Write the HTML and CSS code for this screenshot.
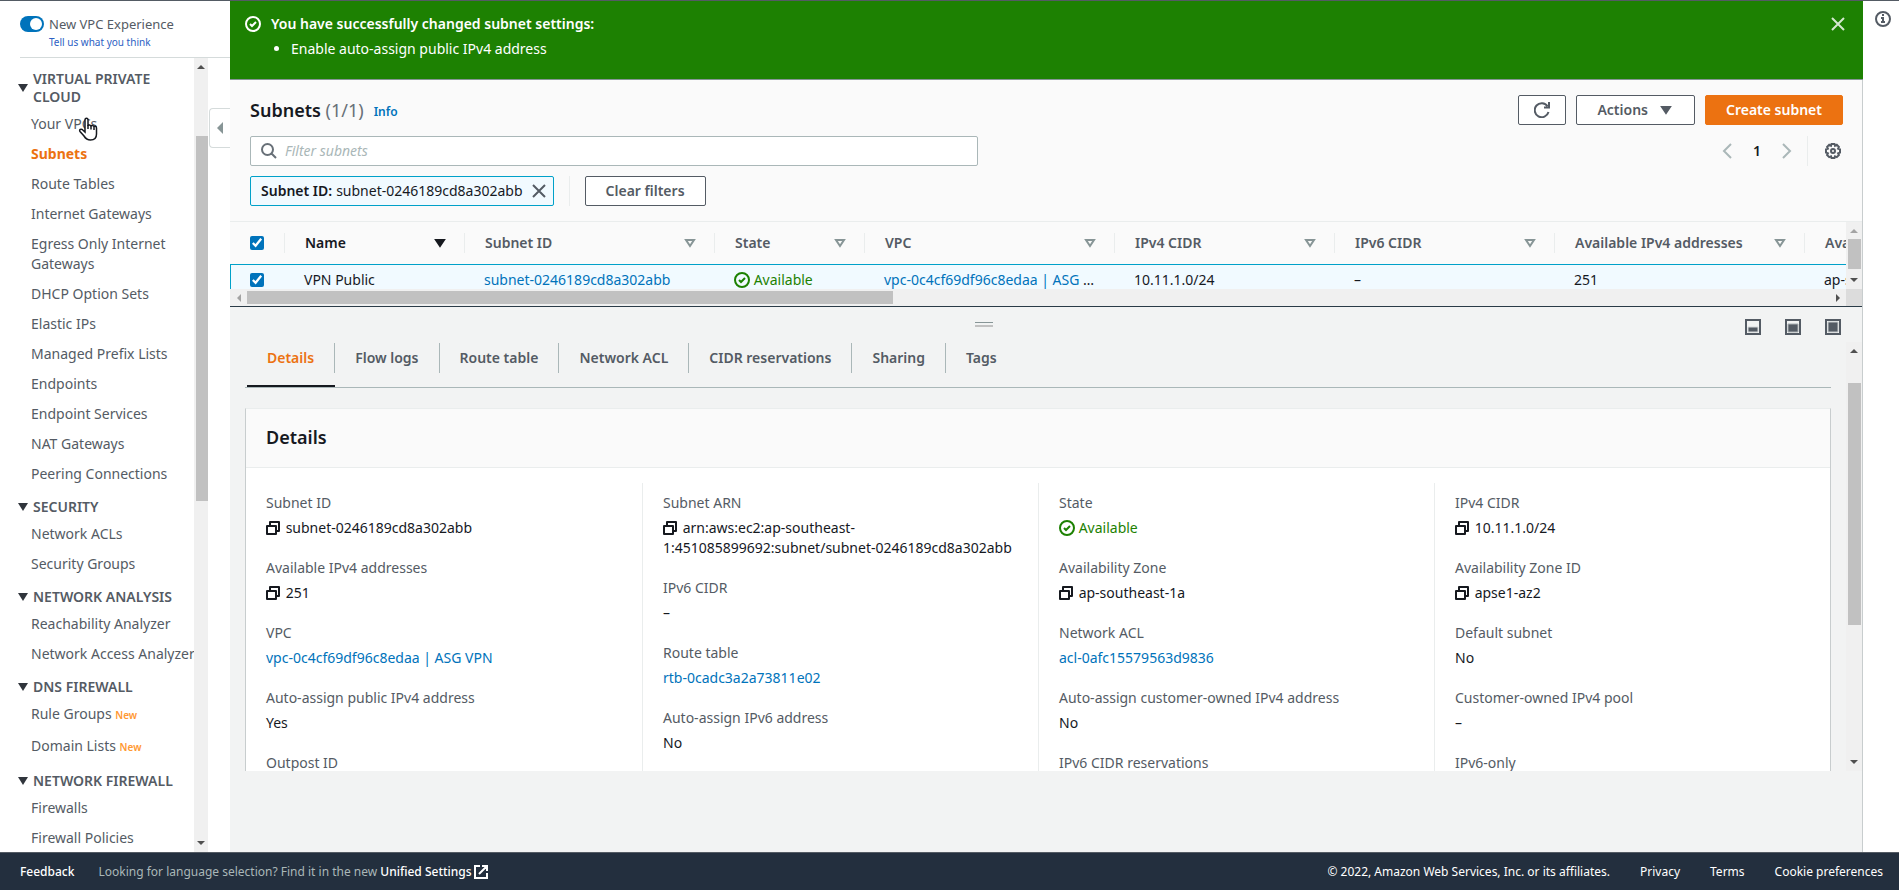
FILE: index.html
```html
<!DOCTYPE html>
<html lang="en">
<head>
  <meta charset="UTF-8">
  <meta name="viewport" content="width=device-width, initial-scale=1">
  <title>Subnets | VPC Management Console</title>
  <link rel="stylesheet" href="styles.css">
</head>
<body>
  <!-- shared icons -->
  <svg class="sprite" aria-hidden="true">
    <symbol id="copy" viewBox="0 0 16 16">
      <path d="M1 6h9v8H1zM4 6V2h9v9h-3" fill="none" stroke="currentColor" stroke-width="2" stroke-linejoin="round"/>
    </symbol>
    <symbol id="check" viewBox="0 0 16 16">
      <circle cx="8" cy="8" r="7" fill="none" stroke="currentColor" stroke-width="2"/>
      <path d="M5 8l2 2 4-4" fill="none" stroke="currentColor" stroke-width="2"/>
    </symbol>
    <symbol id="close" viewBox="0 0 16 16">
      <path d="M2 2l12 12M14 2L2 14" fill="none" stroke="currentColor" stroke-width="2"/>
    </symbol>
    <symbol id="caret" viewBox="0 0 16 16">
      <path d="M4 5h8l-4 6z" fill="currentColor" stroke="currentColor" stroke-width="2"/>
    </symbol>
    <symbol id="caret-open" viewBox="0 0 16 16">
      <path d="M4 5h8l-4 6z" fill="none" stroke="currentColor" stroke-width="2"/>
    </symbol>
  </svg>

  <div class="app">
    <nav class="sidebar">
      <div class="experience">
        <label class="switch"><input type="checkbox" role="switch" checked><span>New VPC Experience</span></label>
        <a href="#">Tell us what you think</a>
      </div>
      <div class="nav-scroll">
        <div class="nav-list">
          <h2>Virtual Private Cloud</h2>
          <ul>
            <li><a href="#">Your VPCs</a></li>
            <li><a href="#" class="current">Subnets</a></li>
            <li><a href="#">Route Tables</a></li>
            <li><a href="#">Internet Gateways</a></li>
            <li class="long"><a href="#">Egress Only Internet Gateways</a></li>
            <li><a href="#">DHCP Option Sets</a></li>
            <li><a href="#">Elastic IPs</a></li>
            <li><a href="#">Managed Prefix Lists</a></li>
            <li><a href="#">Endpoints</a></li>
            <li><a href="#">Endpoint Services</a></li>
            <li><a href="#">NAT Gateways</a></li>
            <li><a href="#">Peering Connections</a></li>
          </ul>
          <h2>Security</h2>
          <ul>
            <li><a href="#">Network ACLs</a></li>
            <li><a href="#">Security Groups</a></li>
          </ul>
          <h2>Network Analysis</h2>
          <ul>
            <li><a href="#">Reachability Analyzer</a></li>
            <li><a href="#">Network Access Analyzer</a></li>
          </ul>
          <h2>DNS Firewall</h2>
          <ul class="with-badges">
            <li><a href="#">Rule Groups</a> <span class="new">New</span></li>
            <li><a href="#">Domain Lists</a> <span class="new">New</span></li>
          </ul>
          <h2>Network Firewall</h2>
          <ul>
            <li><a href="#">Firewalls</a></li>
            <li><a href="#">Firewall Policies</a></li>
          </ul>
        </div>
        <div class="scrollbar nav-bar" aria-hidden="true"><i class="up"></i><b></b><i class="down"></i></div>
      </div>
      <button class="collapse" aria-label="Collapse navigation"></button>
      <svg class="pointer" viewBox="0 0 20 24" aria-hidden="true">
        <path d="M7 15V3c0-2.500 3-2.500 3 0v6c0-1.500 3-1.500 3 .5 0-1.500 3-1.500 3 .5 0-1.300 2.500-1.300 2.500 1V17c0 4-2 6-6 6-3.500 0-5-1.500-6.500-4L2 14.500c-1.200-2 1-3 2.500-1.800z" fill="#fff" stroke="#16191f" stroke-width="1.500"/>
        <path d="M10 8v4M13 9v3.500M16 10v3" stroke="#16191f" stroke-width="1.500"/>
      </svg>
    </nav>

    <main class="main">
      <section class="flash" role="status">
        <svg class="icon"><use href="#check"/></svg>
        <div class="flash-text">
          <strong>You have successfully changed subnet settings:</strong>
          <ul><li>Enable auto-assign public IPv4 address</li></ul>
        </div>
        <button class="plain" aria-label="Dismiss"><svg class="icon"><use href="#close"/></svg></button>
      </section>

      <section class="tools">
        <div class="title-row">
          <h1>Subnets <span>(1/1)</span></h1>
          <a class="info" href="#">Info</a>
          <div class="actions">
            <button class="btn refresh" aria-label="Refresh">
              <svg class="icon" viewBox="0 0 16 16"><path d="M14.500 10A7 7 0 1 1 13.500 4.200M15 0v5.500h-5" fill="none" stroke="currentColor" stroke-width="2"/></svg>
            </button>
            <button class="btn">Actions <svg class="icon"><use href="#caret"/></svg></button>
            <button class="btn primary">Create subnet</button>
          </div>
        </div>
        <div class="filter-row">
          <label class="search">
            <svg class="icon" viewBox="0 0 16 16"><path d="M10.500 10.500L15 15M12 6.500a5.500 5.500 0 1 1-11 0 5.500 5.500 0 0 1 11 0z" fill="none" stroke="currentColor" stroke-width="2"/></svg>
            <input type="text" placeholder="Filter subnets" aria-label="Filter subnets">
          </label>
          <div class="pager">
            <button class="plain off" aria-label="Previous page"><svg class="icon" viewBox="0 0 16 16"><path d="M12 1L5 8l7 7" fill="none" stroke="currentColor" stroke-width="2"/></svg></button>
            <button class="plain page">1</button>
            <button class="plain off" aria-label="Next page"><svg class="icon" viewBox="0 0 16 16"><path d="M4 1l7 7-7 7" fill="none" stroke="currentColor" stroke-width="2"/></svg></button>
            <button class="plain settings" aria-label="Preferences"><svg class="icon" viewBox="0 0 16 16"><path d="M6.500 1h3l.5 1.700 1.800-.9 2.100 2.100-.8 1.700 1.900.7v3.300l-1.900.7.800 1.700-2.100 2.100-1.800-.8-.5 1.600h-3L6 13.300l-1.800.8L2.100 12l.8-1.700L1 9.600V6.300l1.900-.7-.8-1.700 2.100-2.100 1.800.9z" fill="none" stroke="currentColor" stroke-width="2"/><circle cx="8" cy="8" r="2" fill="none" stroke="currentColor" stroke-width="2"/></svg></button>
          </div>
        </div>
        <div class="token-row">
          <span class="token"><strong>Subnet ID:</strong> subnet-0246189cd8a302abb
            <button class="plain" aria-label="Remove filter"><svg class="icon"><use href="#close"/></svg></button></span>
          <span class="rule"></span>
          <button class="btn">Clear filters</button>
        </div>
      </section>

      <section class="table-area">
        <div class="table-clip">
          <table>
            <colgroup>
              <col class="c-check"><col class="c-name"><col class="c-wide"><col class="c-state"><col class="c-wide"><col class="c-cidr"><col class="c-cidr"><col class="c-wide"><col class="c-wide">
            </colgroup>
            <thead>
              <tr>
                <th><input type="checkbox" aria-label="Select all" checked></th>
                <th class="sorted"><div>Name <svg class="icon"><use href="#caret"/></svg></div></th>
                <th><div>Subnet ID <svg class="icon"><use href="#caret-open"/></svg></div></th>
                <th><div>State <svg class="icon"><use href="#caret-open"/></svg></div></th>
                <th><div>VPC <svg class="icon"><use href="#caret-open"/></svg></div></th>
                <th><div>IPv4 CIDR <svg class="icon"><use href="#caret-open"/></svg></div></th>
                <th><div>IPv6 CIDR <svg class="icon"><use href="#caret-open"/></svg></div></th>
                <th><div>Available IPv4 addresses <svg class="icon"><use href="#caret-open"/></svg></div></th>
                <th><div>Availability Zone</div></th>
              </tr>
            </thead>
            <tbody>
              <tr>
                <td><input type="checkbox" aria-label="Select VPN Public" checked></td>
                <td>VPN Public</td>
                <td><a href="#">subnet-0246189cd8a302abb</a></td>
                <td><span class="ok"><svg class="icon"><use href="#check"/></svg> Available</span></td>
                <td><a href="#">vpc-0c4cf69df96c8edaa | ASG </a>…</td>
                <td>10.11.1.0/24</td>
                <td>–</td>
                <td>251</td>
                <td>ap-southeast-1a</td>
              </tr>
            </tbody>
          </table>
        </div>
        <div class="scrollbar table-bar" aria-hidden="true"><i class="up"></i><b></b><i class="down"></i></div>
        <div class="h-scrollbar" aria-hidden="true"><i class="left"></i><b></b><i class="right"></i></div>
        <div class="corner"></div>
      </section>

      <section class="split">
        <div class="split-head">
          <span class="grip"></span>
          <div class="sizes">
            <button class="plain" aria-label="Small panel"><svg class="icon" viewBox="0 0 16 16"><path d="M1 1h14v14H1z" fill="none" stroke="currentColor" stroke-width="2"/><path d="M3 8h10v5H3z" fill="currentColor" stroke="#d5d9da"/></svg></button>
            <button class="plain" aria-label="Medium panel"><svg class="icon" viewBox="0 0 16 16"><path d="M1 1h14v14H1z" fill="none" stroke="currentColor" stroke-width="2"/><path d="M3 5h10v8H3z" fill="currentColor" stroke="#a9afb2"/></svg></button>
            <button class="plain" aria-label="Full panel"><svg class="icon" viewBox="0 0 16 16"><path d="M1 1h14v14H1z" fill="none" stroke="currentColor" stroke-width="2"/><path d="M3 3h10v10H3z" fill="currentColor" stroke="#c5cacc"/></svg></button>
          </div>
        </div>
        <div class="split-body">
          <div class="split-content">
            <div class="tabs" role="tablist">
              <button role="tab" aria-selected="true">Details</button>
              <button role="tab">Flow logs</button>
              <button role="tab">Route table</button>
              <button role="tab">Network ACL</button>
              <button role="tab">CIDR reservations</button>
              <button role="tab">Sharing</button>
              <button role="tab">Tags</button>
            </div>
            <div class="card">
              <h2>Details</h2>
              <div class="columns">
                <dl>
                  <dt>Subnet ID</dt><dd><svg class="icon"><use href="#copy"/></svg> subnet-0246189cd8a302abb</dd>
                  <dt>Available IPv4 addresses</dt><dd><svg class="icon"><use href="#copy"/></svg> 251</dd>
                  <dt>VPC</dt><dd><a href="#">vpc-0c4cf69df96c8edaa | ASG VPN</a></dd>
                  <dt>Auto-assign public IPv4 address</dt><dd>Yes</dd>
                  <dt>Outpost ID</dt><dd>–</dd>
                </dl>
                <dl>
                  <dt>Subnet ARN</dt><dd><svg class="icon"><use href="#copy"/></svg> arn:aws:ec2:ap-southeast-<br>1:451085899692:subnet/subnet-0246189cd8a302abb</dd>
                  <dt>IPv6 CIDR</dt><dd>–</dd>
                  <dt>Route table</dt><dd><a href="#">rtb-0cadc3a2a73811e02</a></dd>
                  <dt>Auto-assign IPv6 address</dt><dd>No</dd>
                </dl>
                <dl>
                  <dt>State</dt><dd class="ok"><svg class="icon"><use href="#check"/></svg> Available</dd>
                  <dt>Availability Zone</dt><dd><svg class="icon"><use href="#copy"/></svg> ap-southeast-1a</dd>
                  <dt>Network ACL</dt><dd><a href="#">acl-0afc15579563d9836</a></dd>
                  <dt>Auto-assign customer-owned IPv4 address</dt><dd>No</dd>
                  <dt>IPv6 CIDR reservations</dt><dd>–</dd>
                </dl>
                <dl>
                  <dt>IPv4 CIDR</dt><dd><svg class="icon"><use href="#copy"/></svg> 10.11.1.0/24</dd>
                  <dt>Availability Zone ID</dt><dd><svg class="icon"><use href="#copy"/></svg> apse1-az2</dd>
                  <dt>Default subnet</dt><dd>No</dd>
                  <dt>Customer-owned IPv4 pool</dt><dd>–</dd>
                  <dt>IPv6-only</dt><dd>No</dd>
                </dl>
              </div>
            </div>
          </div>
          <div class="scrollbar split-bar" aria-hidden="true"><i class="up"></i><b></b><i class="down"></i></div>
        </div>
      </section>
    </main>

    <aside class="help">
      <button class="plain" aria-label="Open help panel"><svg class="icon" viewBox="0 0 16 16"><circle cx="8" cy="8" r="7" fill="none" stroke="currentColor" stroke-width="2"/><path d="M7 3h2v2H7zM6 6h3v4h1v2H6v-2h1V8H6z" fill="currentColor"/></svg></button>
    </aside>
  </div>

  <footer class="footer">
    <a href="#">Feedback</a>
    <p>Looking for language selection? Find it in the new <a href="#">Unified Settings<svg class="icon" viewBox="0 0 16 16"><path d="M7 2H2v12h12V9M9 2h5v5M14 2L6 10" fill="none" stroke="currentColor" stroke-width="2"/></svg></a></p>
    <div class="legal">
      <span>© 2022, Amazon Web Services, Inc. or its affiliates.</span>
      <a href="#">Privacy</a>
      <a href="#">Terms</a>
      <a href="#">Cookie preferences</a>
    </div>
  </footer>
</body>
</html>
```
FILE: styles.css
```css
* {
  box-sizing: border-box;
}
body {
  margin: 0;
  height: 100vh;
  display: flex;
  flex-direction: column;
  border-top: 1px solid #545b64;
  font-family: "Noto Sans", sans-serif;
  font-size: 14px;
  line-height: 20px;
  color: #16191f;
  background: #fff;
  overflow: hidden;
}
h1, h2, ul, dl, dd, p {
  margin: 0;
  padding: 0;
}
h1, h2, th, strong {
  font-weight: 600;
}
a {
  color: #0073bb;
  text-decoration: none;
}
button, input {
  font: inherit;
  color: inherit;
}
.sprite {
  position: absolute;
  width: 0;
  height: 0;
}
.icon {
  width: 16px;
  height: 16px;
  flex: none;
}
.plain {
  display: flex;
  padding: 0;
  border: 0;
  background: none;
  color: #545b64;
}
.app {
  flex: 1;
  min-height: 0;
  display: grid;
  grid-template-columns: 230px minmax(0, 1fr) 36px;
}

/* sidebar */
.sidebar {
  position: relative;
  display: flex;
  flex-direction: column;
  min-height: 0;
  color: #545b64;
}
.experience {
  margin-left: 20px;
  height: 57px;
  padding-top: 13px;
  border-bottom: 1px solid #d5dbdb;
}
.experience a {
  display: block;
  margin-left: 29px;
  font-size: 10px;
  line-height: 16px;
  color: #2d5fc4;
}
.switch {
  display: flex;
  align-items: center;
  gap: 5px;
  font-size: 13px;
}
.switch input {
  appearance: none;
  margin: 0;
  width: 24px;
  height: 16px;
  padding: 2px;
  border-radius: 8px;
  background: #0073bb;
  display: flex;
  justify-content: flex-end;
}
.switch input::before {
  content: "";
  width: 12px;
  height: 12px;
  border-radius: 50%;
  background: #fff;
}
.nav-scroll {
  flex: 1;
  min-height: 0;
  display: flex;
  overflow: hidden;
}
.nav-list {
  width: 194px;
  padding-top: 3px;
}
.nav-list h2 {
  display: flex;
  align-items: center;
  gap: 5px;
  margin: 9px 10px 3px 18px;
  font-size: 14px;
  line-height: 18px;
  text-transform: uppercase;
}
.nav-list h2::before {
  content: "";
  border: 5px solid transparent;
  border-top: 8px solid #30353c;
  border-bottom: 0;
}
.nav-list ul {
  list-style: none;
}
.nav-list li {
  padding: 5px 0 5px 31px;
  white-space: nowrap;
}
.nav-list .long {
  white-space: normal;
}
.nav-list .with-badges li {
  padding-bottom: 7px;
}
.nav-list a {
  color: #545b64;
}
.nav-list .current {
  color: #ec7211;
  font-weight: bold;
}
.new {
  font-size: 10px;
  font-weight: 600;
  line-height: 16px;
  color: #ff9933;
}
.collapse {
  position: absolute;
  right: 0;
  top: 107px;
  width: 21px;
  height: 40px;
  padding: 0 0 0 7px;
  border: 1px solid #d5dbdb;
  border-right: 0;
  border-radius: 4px 0 0 4px;
  background: #fff;
}
.collapse::before {
  content: "";
  display: block;
  width: 0;
  border: 6px solid transparent;
  border-right-color: #879596;
  border-left: 0;
}
.pointer {
  position: absolute;
  left: 78px;
  top: 116px;
  width: 20px;
  height: 24px;
}

/* scrollbars */
.scrollbar {
  display: flex;
  flex-direction: column;
  align-items: center;
  background: #f0f0f0;
}
.scrollbar b, .h-scrollbar b {
  background: #c1c1c1;
}
.scrollbar i, .h-scrollbar i {
  border: 4px solid transparent;
}
.scrollbar .up {
  margin-top: 7px;
  border-top: 0;
  border-bottom-color: #505050;
}
.scrollbar .down {
  margin: auto 0 7px;
  border-bottom: 0;
  border-top-color: #505050;
}
.nav-bar {
  width: 14px;
}
.nav-bar b {
  align-self: stretch;
  margin: 67px 0 0 2px;
  height: 46%;
}

/* main column */
.main {
  display: flex;
  flex-direction: column;
  min-height: 0;
  background: #f2f3f3;
  border-right: 1px solid #c8cdce;
}
.flash {
  display: flex;
  align-items: flex-start;
  gap: 10px;
  height: 79px;
  margin-right: -1px;
  padding: 13px 17px 0 15px;
  background: #1d8102;
  border-bottom: 1px solid #879596;
  color: #fff;
}
.flash > .icon, .flash .plain {
  margin-top: 2px;
}
.flash-text {
  flex: 1;
}
.flash ul {
  margin-top: 5px;
  padding-left: 20px;
}
.flash .plain {
  color: #d5e8d0;
}
.tools {
  display: flex;
  flex-direction: column;
  gap: 10px;
  padding: 15px 19px 15px 20px;
  background: #fafafa;
  border-bottom: 1px solid #eaeded;
}
.title-row, .filter-row, .token-row, .actions, .pager {
  display: flex;
  align-items: center;
}
.title-row {
  gap: 10px;
}
h1 {
  font-size: 18px;
  line-height: 22px;
}
h1 span {
  font-weight: normal;
  color: #687078;
}
.info {
  font-size: 12px;
  font-weight: 600;
  padding-top: 4px;
}
.actions {
  margin-left: auto;
  gap: 10px;
}
.btn {
  display: flex;
  align-items: center;
  justify-content: center;
  gap: 10px;
  height: 30px;
  padding: 0 20px;
  border: 1px solid #545b64;
  border-radius: 2px;
  background: #fff;
  color: #545b64;
  font-weight: 600;
}
.refresh {
  padding: 0 15px;
}
.primary {
  border-color: #ec7211;
  background: #ec7211;
  color: #fff;
}
.filter-row {
  height: 31px;
  justify-content: space-between;
}
.search {
  width: 100%;
  max-width: 728px;
  height: 30px;
  display: flex;
  align-items: center;
  gap: 8px;
  padding: 0 10px;
  border: 1px solid #aab7b8;
  border-radius: 2px;
  background: #fff;
  color: #687078;
}
.search input {
  flex: 1;
  border: 0;
  padding: 0;
  outline: 0;
  background: none;
}
.search input::placeholder {
  color: #aab7b8;
  font-style: italic;
}
.off {
  color: #aab7b8;
}
.page {
  margin: 0 18px;
  color: #16191f;
  font-weight: 600;
}
.settings {
  height: 30px;
  align-items: center;
  margin-left: 12px;
  padding: 0 2px 0 17px;
  border-left: 1px solid #eaeded;
}
.token-row {
  gap: 15px;
}
.token {
  height: 30px;
  display: flex;
  align-items: center;
  gap: 4px;
  padding: 0 6px 0 10px;
  border: 1px solid #00a1c9;
  border-radius: 2px;
  background: #f1faff;
}
.token .plain {
  margin-left: 4px;
}
.rule {
  width: 1px;
  height: 30px;
  background: #eaeded;
}

/* table */
.table-area {
  display: grid;
  grid-template: 67px 17px / minmax(0, 1fr) 16px;
  background: #f0f0f0;
  border-bottom: 1px solid #2a3b47;
}
.table-clip {
  overflow: hidden;
  background: #fafafa;
}
table {
  width: 1824px;
  table-layout: fixed;
  border-collapse: separate;
  border-spacing: 0;
}
.c-check { width: 54px; }
.c-name { width: 180px; }
.c-wide { width: 250px; }
.c-state { width: 150px; }
.c-cidr { width: 220px; }
th {
  padding: 11px 0;
  text-align: left;
  color: #545b64;
}
th div {
  display: flex;
  align-items: center;
  justify-content: space-between;
  padding: 0 16px 0 20px;
  border-left: 1px solid #eaeded;
}
.sorted, .sorted .icon {
  color: #16191f;
}
th:not(.sorted) .icon {
  color: #879596;
}
td {
  height: 40px;
  padding: 5px 0 14px 20px;
  border-top: 1px solid #00a1c9;
  background: #f1faff;
  white-space: nowrap;
}
th:first-child {
  padding-left: 20px;
}
td:first-child {
  padding-left: 19px;
  border-left: 1px solid #00a1c9;
}
th input, td input {
  display: block;
  width: 14px;
  height: 14px;
  margin: 0;
  accent-color: #0073bb;
}
.ok {
  color: #1d8102;
}
td .icon, dd .icon {
  vertical-align: -3px;
}
.table-bar b {
  width: 13px;
  height: 30px;
  margin-top: 6px;
}
.table-bar .up {
  border-bottom-color: #a3a3a3;
}
.h-scrollbar {
  display: flex;
  align-items: center;
}
.h-scrollbar b {
  width: 40%;
  height: 13px;
  margin-left: 6px;
}
.h-scrollbar .left {
  margin-left: 7px;
  border-left: 0;
  border-right-color: #a3a3a3;
}
.h-scrollbar .right {
  margin: 0 6px 0 auto;
  border-right: 0;
  border-left-color: #505050;
}
.corner {
  background: #dcdcdc;
}

/* split panel */
.split {
  flex: 1;
  min-height: 0;
  display: flex;
  flex-direction: column;
  padding-bottom: 81px;
}
.split-head {
  height: 35px;
  display: grid;
  grid-template-columns: 1fr auto 1fr;
}
.grip {
  grid-column: 2;
  width: 18px;
  height: 5px;
  margin-top: 15px;
  margin-right: 125px;
  border-top: 1px solid #879596;
  border-bottom: 2px solid #c1c1c1;
}
.sizes {
  display: flex;
  justify-content: flex-end;
  gap: 24px;
  padding: 12px 21px 0 0;
}
.split-body {
  flex: 1;
  min-height: 0;
  display: flex;
  overflow: hidden;
}
.split-content {
  flex: 1;
  padding: 0 15px;
}
.split-bar {
  width: 16px;
}
.split-bar b {
  width: 13px;
  height: 242px;
  margin-top: 30px;
}
.tabs {
  display: flex;
  height: 46px;
  padding-left: 2px;
  border-bottom: 1px solid #aab7b8;
}
.tabs button {
  display: flex;
  height: 45px;
  padding: 0;
  border: 0;
  border-bottom: 2px solid transparent;
  background: none;
  color: #545b64;
  font-weight: 600;
  line-height: 32px;
}
.tabs button::before {
  content: "";
  width: 20px;
}
.tabs button::after {
  content: "";
  width: 20px;
  height: 30px;
  margin-top: 1px;
  border-right: 1px solid #aab7b8;
}
.tabs button:last-child::after {
  border: 0;
}
.tabs [aria-selected="true"] {
  color: #ec7211;
  border-bottom-color: #16191f;
}
.card {
  margin-top: 20px;
  background: #fff;
  border: 1px solid #c8cdce;
  border-top-color: #eaeded;
}
.card h2 {
  padding: 17px 20px 19px;
  font-size: 18px;
  line-height: 22px;
  background: #fafafa;
  border-bottom: 1px solid #eaeded;
}
.columns {
  display: grid;
  grid-template-columns: repeat(4, 1fr);
  padding: 15px 0;
}
.columns dl {
  padding: 10px 20px;
  border-left: 1px solid #eaeded;
}
.columns dl:first-child {
  border-left: 0;
}
dt {
  margin-bottom: 5px;
  color: #545b64;
}
dd {
  margin-bottom: 20px;
}

.help .plain {
  margin: 10px 8px 0 auto;
}

/* footer */
.footer {
  display: flex;
  align-items: center;
  height: 38px;
  padding: 0 16px 0 20px;
  border-top: 1px solid #545b64;
  background: #232f3e;
  color: #fff;
  font-size: 12px;
}
.footer a {
  color: #fff;
}
.footer > a, .footer p a {
  font-weight: 500;
}
.footer p {
  margin-left: 24px;
  color: #aab7b8;
}
.footer .icon {
  vertical-align: -4px;
  margin-left: 1px;
}
.legal {
  display: flex;
  gap: 30px;
  margin-left: auto;
}
```
